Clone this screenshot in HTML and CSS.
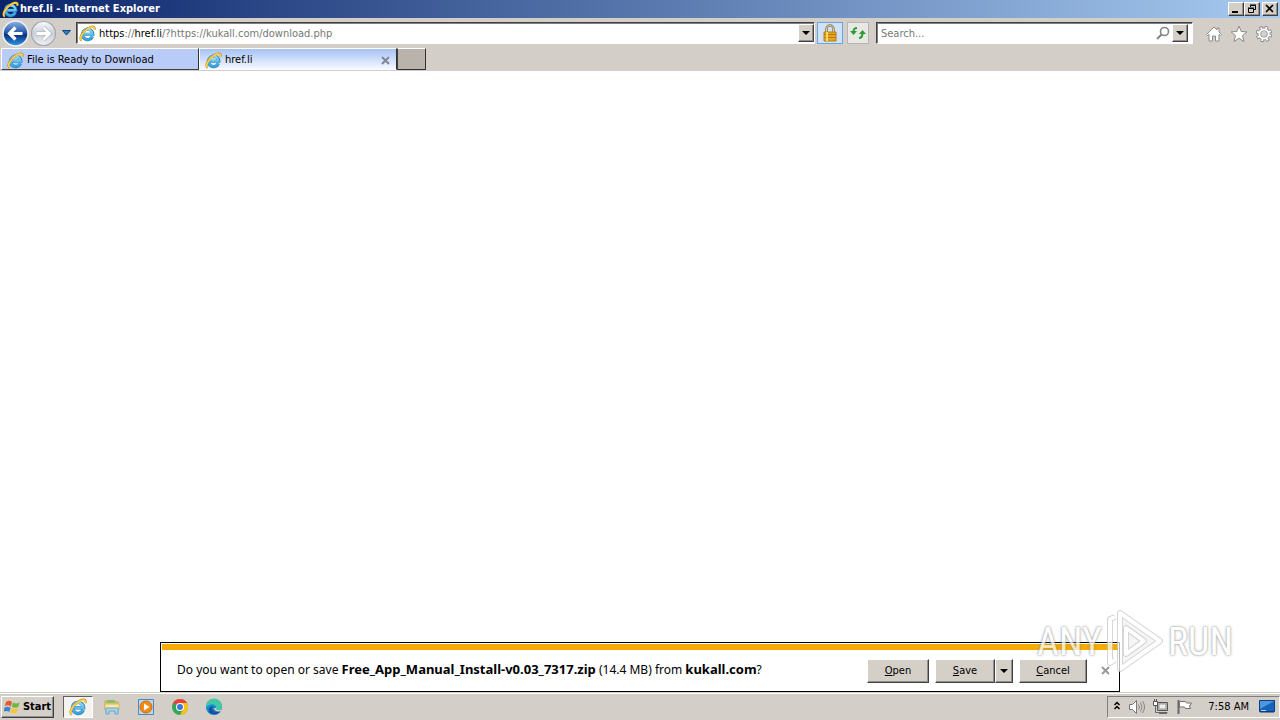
FILE: index.html
```html
<!DOCTYPE html>
<html lang="en">
<head>
<meta charset="utf-8">
<title>href.li - Internet Explorer</title>
<link rel="stylesheet" href="styles.css">
</head>
<body>
<svg class="defs" aria-hidden="true">
  <defs>
    <linearGradient id="blue" x1="0" y1="0" x2="0" y2="1"><stop offset="0" stop-color="#8bdcf8"/><stop offset="1" stop-color="#35a3e0"/></linearGradient>
    <linearGradient id="ball" x1="0" y1="0" x2="0" y2="1"><stop offset="0" stop-color="#8fb4e4"/><stop offset=".45" stop-color="#2b5cac"/><stop offset=".55" stop-color="#0b2f7c"/><stop offset="1" stop-color="#2f9bf0"/></linearGradient>
    <linearGradient id="pale" x1="0" y1="0" x2="0" y2="1"><stop offset="0" stop-color="#fafbfd"/><stop offset=".5" stop-color="#c9cfd8"/><stop offset="1" stop-color="#eef2f6"/></linearGradient>
    <symbol id="ie" viewBox="0 0 18 18">
      <path d="M14.2 12A5.500 5.500 0 1 1 14.600 9.800H5.500" fill="none" stroke="#2b7cb8" stroke-width="3.400"/>
      <path d="M14 12A5.400 5.400 0 1 1 14.400 9.800H5.500" fill="none" stroke="url(#blue)" stroke-width="2.400"/>
      <path d="M3 16.500C-.6 15 3.200 7.500 9.300 3.600 13.200 1 17.800.6 16.200 5" fill="none" stroke="#c18b12" stroke-width="2.300"/>
      <path d="M3 16.300C-.3 14.800 3.400 7.700 9.400 3.800 13 1.400 17.400 1 16 5" fill="none" stroke="#fbd550" stroke-width="1.600"/>
    </symbol>
    <symbol id="down" viewBox="0 0 8 4"><path d="M0 0h8L4 4z" fill="#000"/></symbol>
  </defs>
</svg>

<header class="titlebar">
  <svg class="ie-icon"><use href="#ie"/></svg>
  <h1 class="title">href.li - Internet Explorer</h1>
  <div class="window-buttons">
    <button class="win" aria-label="Minimize"><svg width="12" height="10"><path d="M2 8h6" stroke="#000" stroke-width="2"/></svg></button>
    <button class="win" aria-label="Restore"><svg width="12" height="10"><path d="M4.500 3V1.500h5v4H8M4 1h6M2.500 4.500h5v4h-5zM2 4h6" fill="none" stroke="#000"/></svg></button>
    <button class="win last" aria-label="Close"><svg width="12" height="10"><path d="M2 1l7 7M9 1L2 8" stroke="#000" stroke-width="1.700"/></svg></button>
  </div>
</header>

<nav class="navbar">
  <button class="plain" aria-label="Back"><svg width="27" height="27"><circle cx="13.500" cy="13.500" r="12.500" fill="url(#ball)" stroke="#eef2f8" stroke-width="1.500"/><path d="M20.500 13.500H8M13.500 7.500l-6 6 6 6" fill="none" stroke="#fff" stroke-width="3.200"/></svg></button>
  <button class="plain forward" aria-label="Forward"><svg width="27" height="27"><circle cx="13.500" cy="13.500" r="12" fill="url(#pale)" stroke="#a2a7b0" stroke-width="1.200"/><path d="M6.500 13.500H19M13.500 7.500l6 6-6 6" fill="none" stroke="#a8aeb8" stroke-width="4"/><path d="M6.500 13.500H19M13.500 7.500l6 6-6 6" fill="none" stroke="#fff" stroke-width="2.800"/></svg></button>
  <button class="plain recent" aria-label="Recent pages"><svg width="9" height="6"><path d="M.5.500h8l-4 4.500z" fill="#2385c8" stroke="#123f80"/></svg></button>
  <div class="field address">
    <svg class="ie-icon"><use href="#ie"/></svg>
    <div class="url" role="textbox" aria-label="Address" contenteditable="true" spellcheck="false"><b>https</b>://<b>href.li</b>/?https://kukall.com/download.php</div>
    <button class="drop" aria-label="Show addresses"><svg width="8" height="4"><use href="#down"/></svg></button>
  </div>
  <button class="tool lock" aria-label="Security report"><svg width="16" height="18"><path d="M4.500 9V5a3.500 3.500 0 0 1 7 0v4" fill="none" stroke="#8d7b4c" stroke-width="2.500"/><path d="M4.500 9V5a3.500 3.500 0 0 1 7 0v4" fill="none" stroke="#d9cda4"/><path d="M2 8h12v9H2z" fill="#e5a51d" stroke="#b87d12"/><path d="M2 10.500h12M2 13.500h12" stroke="#b97b10"/><path d="M5 8v9" stroke="#fbd568" stroke-width="2"/></svg></button>
  <button class="tool refresh" aria-label="Refresh"><svg width="18" height="16"><path d="M8 3C5 3 4.500 4 4.500 7M10 13c3 0 3.500-2 3.500-5" fill="none" stroke="#2f9b35" stroke-width="2"/><path d="M1 6h7L4.500 10zM10 9h7L13.500 5z" fill="#2f9b35"/></svg></button>
  <div class="field search">
    <input class="search-input" type="text" placeholder="Search..." aria-label="Search">
    <svg width="14" height="14"><circle cx="8.500" cy="5.500" r="4" fill="#fff" stroke="#858585" stroke-width="1.600"/><path d="M5.500 8.500L1 13" stroke="#858585" stroke-width="2.200"/></svg>
    <button class="drop" aria-label="Search options"><svg width="8" height="4"><use href="#down"/></svg></button>
  </div>
  <div class="commands">
    <button class="plain" aria-label="Home"><svg width="18" height="18"><path d="M1.500 9.500L9 2l3 3V3h2v4l2.500 2.500-1 1L14 9.500V16h-3.500v-5h-3v5H4V9.500l-1.500 1z" fill="#fff" stroke="#8c8c8c"/></svg></button>
    <button class="plain" aria-label="Favorites"><svg width="18" height="18"><path d="M9 1l2.200 5.500 5.800.4-4.500 3.700 1.500 5.900L9 13.300 4 16.500l1.500-5.900L1 6.900l5.800-.4z" fill="#fff" stroke="#8c8c8c"/></svg></button>
    <button class="plain" aria-label="Tools"><svg width="18" height="18"><circle cx="9" cy="9" r="6.400" fill="none" stroke="#808080" stroke-width="3.600" stroke-dasharray="2.900 2.127"/><circle cx="9" cy="9" r="4.700" fill="none" stroke="#808080" stroke-width="3.600"/><circle cx="9" cy="9" r="6.300" fill="none" stroke="#fff" stroke-width="2.200" stroke-dasharray="1.800 3.148" stroke-dashoffset="-.55"/><circle cx="9" cy="9" r="4.600" fill="none" stroke="#fff" stroke-width="2"/></svg></button>
  </div>
</nav>

<div class="tabs" role="tablist">
  <button class="tab" role="tab" aria-selected="false"><svg class="ie-icon"><use href="#ie"/></svg><span>File is Ready to Download</span></button>
  <div class="tab active">
    <button class="tab-label" role="tab" aria-selected="true"><svg class="ie-icon"><use href="#ie"/></svg><span>href.li</span></button>
    <button class="plain" aria-label="Close tab"><svg width="9" height="9"><path d="M1 1l7 7M8 1L1 8" stroke="#7e8799" stroke-width="2"/></svg></button>
  </div>
  <button class="new-tab" aria-label="New tab"></button>
</div>

<main class="page">
  <section class="notice" aria-label="Download">
    <div class="stripe"></div>
    <div class="notice-row">
      <p class="message">Do you want to open or save <b>Free_App_Manual_Install-v0.03_7317.zip</b> (14.4 MB) from <b>kukall.com</b>?</p>
      <div class="actions">
        <button class="action"><span><u>O</u>pen</span></button>
        <div class="split"><button class="action save"><span><u>S</u>ave</span></button><button class="action more" aria-label="Save options"><svg width="8" height="4"><use href="#down"/></svg></button></div>
        <button class="action cancel"><span><u>C</u>ancel</span></button>
        <button class="plain close" aria-label="Close"><svg width="9" height="9"><path d="M1 1l7 7M8 1L1 8" stroke="#9a9a9a" stroke-width="2"/></svg></button>
      </div>
    </div>
  </section>
  <div class="watermark">
    <span>ANY</span>
    <svg width="58" height="68" viewBox="0 0 58 68"><g fill="none" stroke="#c4c4c4" stroke-width="6" stroke-linejoin="round"><path d="M14 5L54 33 14 61z" fill="#f1f1f1"/><path d="M9 9L4 11v44l5-3M20 20v26l18-13z"/></g><g fill="none" stroke="#fff" stroke-width="4" stroke-linejoin="round"><path d="M14 5L54 33 14 61z"/><path d="M9 9L4 11v44l5-3M20 20v26l18-13z"/></g></svg>
    <span>RUN</span>
  </div>
</main>

<footer class="taskbar">
  <button class="start"><svg width="18" height="16"><path d="M2 3c2-2 4-1.500 6 0L6.800 7.500c-2-1.500-4-1.500-6-.3z" fill="#e8592a"/><path d="M9 3.500c2 1.200 4 1.200 6.500 0L14.200 8c-2 1-4 1-6.400-.2z" fill="#70b53c"/><path d="M.6 8.500c2-1.200 4-1 6 .3L5.300 13c-2-1.300-4-1.300-5.800-.1z" fill="#3d82d2"/><path d="M7.500 9c2 1.200 4 1.300 6.500.2l-1.300 4.300c-2 1-4 1-6.400-.3z" fill="#f7c52f"/></svg><span>Start</span></button>
  <div class="apps">
    <button class="app current" aria-label="Internet Explorer"><svg width="18" height="18"><use href="#ie"/></svg></button>
    <button class="app" aria-label="File Explorer"><svg width="18" height="18"><path d="M2 3h5l1 1h7v8H2z" fill="#e9c86a" stroke="#c5a34c"/><path d="M4 2h8v3H4z" fill="#84c26d"/><path d="M2 6h14v6H2z" fill="#fae9a5" stroke="#d7b75d"/><path d="M3 10h12v6h-3v-3H6v3H3z" fill="#a9d6ee" stroke="#65a5cc"/></svg></button>
    <button class="app" aria-label="Media Player"><svg width="18" height="18"><path d="M1.500 1.500h15v15h-15z" fill="#b9d7f1" stroke="#4f87bd"/><circle cx="9" cy="9" r="6" fill="#f08a13" stroke="#d06b08"/><path d="M7 5.500v7L12.500 9z" fill="#fff"/></svg></button>
    <button class="app" aria-label="Chrome"><svg width="18" height="18"><circle cx="9" cy="9" r="8" fill="#34a853"/><path d="M9 9L2.100 5A8 8 0 0 1 16 5H9z" fill="#ea4335"/><path d="M9 9V5h7A8 8 0 0 1 9 17l3-6z" fill="#fbc116"/><circle cx="9" cy="9" r="4" fill="#fff"/><circle cx="9" cy="9" r="3" fill="#3878e0"/></svg></button>
    <button class="app" aria-label="Edge"><svg width="18" height="18"><circle cx="9" cy="9" r="8" fill="#1683cb"/><path d="M1 9a8 8 0 0 1 16-1c.2 3-2 4-4.500 4-2 0-2-1-1.500-2 .6-3-5-5-10-1z" fill="#42c8a2"/><path d="M1 10c2-4 7-5 10-2-4-1-5 4-1 7-5-1-8-1-9-5z" fill="#1793d2"/><path d="M8 8c-2 4 1 7 7 5.500C12 18 4 17 3.500 12 4 9 6 8 8 8z" fill="#1254a0"/><path d="M11 10c0 2 2 3 6 1l-1 2c-3 1-7 0-7-3z" fill="#d4d0c8"/></svg></button>
  </div>
  <div class="tray">
    <svg width="9" height="12"><path d="M1.500 4L4 1.500 6.500 4M1.500 8L4 5.500 6.500 8" fill="none" stroke="#000" stroke-width="1.500"/></svg>
    <svg width="18" height="16"><path d="M1.500 5.500h3l4-4v13l-4-4h-3z" fill="#fff" stroke="#777"/><path d="M10.500 5.500q2 2.500 0 5M12.500 3.500q3 4.500 0 9M14.500 2q4 6 0 12" fill="none" stroke="#858585"/></svg>
    <svg width="18" height="16"><path d="M5.500 3.500h10v8h-10z" fill="#bbb" stroke="#555"/><path d="M7 5h7v5H7z" fill="#eee" stroke="#999"/><path d="M3.500 7v6.500h12M7 14.500h8" fill="none" stroke="#666"/><path d="M1.500 2.500h4v4h-4z" fill="#fff" stroke="#555"/><path d="M2.500 0v2M4.500 0v2" stroke="#555"/></svg>
    <svg width="18" height="16"><path d="M2.500 1v14" stroke="#666" stroke-width="2"/><path d="M3.500 2.500h6l1 1.500h5l-2 3 1 2.500H9.500l-1-1.500h-5z" fill="#fff" stroke="#707070"/></svg>
    <time class="clock">7:58 AM</time>
    <button class="plain" aria-label="Show desktop"><svg width="16" height="14"><path d="M.5.500h15v11H.5z" fill="#1763bb" stroke="#0d3e80"/><path d="M1 1h14L1 9z" fill="#4c98df"/><path d="M1 12.500h14" stroke="#75818f"/><path d="M2 10.500h5" stroke="#a8dcff"/></svg></button>
  </div>
</footer>
</body>
</html>
```
FILE: styles.css
```css
* { box-sizing: border-box; }
body {
  margin: 0;
  min-height: 100vh;
  display: flex;
  flex-direction: column;
  background: #fff;
  color: #000;
  font: 11px/14px Tahoma, "DejaVu Sans Condensed", "Noto Sans", sans-serif;
}
button, input { font: inherit; color: inherit; margin: 0; padding: 0; }
button { display: flex; align-items: center; justify-content: center; }
svg { display: block; flex: none; }
.defs { position: absolute; width: 0; height: 0; }
.ie-icon { width: 17px; height: 17px; }
.plain { border: 0; background: none; }

.titlebar {
  display: flex;
  align-items: center;
  height: 18px;
  padding: 0 2px;
  background: linear-gradient(90deg, #0a246a, #a6caf0);
  color: #fff;
}
.title { margin: 0; padding-left: 1px; flex: 1; font-size: 11px; line-height: 18px; font-weight: bold; }
.window-buttons { display: flex; }
.win, .drop, .action, .start {
  background: #d4d0c8;
  border: 1px solid;
  border-color: #fff #404040 #404040 #fff;
  box-shadow: inset -1px -1px #909090;
}
.win { width: 16px; height: 14px; }
.win.last { margin-left: 2px; }

.navbar {
  display: flex;
  align-items: center;
  height: 30px;
  padding-left: 2px;
  background: #d4cec8;
}
.forward { margin-left: 1px; }
.recent { width: 19px; }
.field {
  display: flex;
  align-items: center;
  height: 22px;
  background: #fff;
  border: 1px solid;
  border-color: #404040 #fff #fff #404040;
  box-shadow: inset 1px 1px #808080;
}
.address { flex: 742; padding-left: 2px; }
.url { flex: 1; padding: 2px 0 0 3px; color: #777; white-space: nowrap; outline: 0; }
.url b { font-weight: normal; color: #000; }
.drop { width: 16px; height: 18px; }
.tool { width: 22px; height: 22px; border: 1px solid #b5b5b5; background: #e8e8e5; }
.lock { width: 26px; margin: 0 4px 0 2px; border-color: #6da4e4; background: #cfe2fa; }
.search { flex: 314; margin-left: 7px; padding-right: 4px; gap: 2px; }
.search-input { flex: 1; min-width: 0; padding: 2px 0 0 4px; border: 0; background: none; outline: 0; }
.search-input::placeholder { color: #777; opacity: 1; }
.commands { display: flex; gap: 7px; padding: 2px 7px 0 12px; }

.tabs { display: flex; height: 23px; padding: 0 0 1px 1px; background: #d4cec8; }
.tab {
  display: flex;
  align-items: center;
  justify-content: flex-start;
  gap: 3px;
  width: 198px;
  padding: 2px 5px 0;
  border: 1px solid;
  border-color: #fff #303030 #404040 #fff;
  background: #b9cbf7;
}
.tab.active {
  justify-content: space-between;
  padding: 2px 6px 0 5px;
  border-bottom-color: #f7faff;
  background: linear-gradient(#a6c2f5, #f5f9ff);
}
.tab-label { gap: 3px; border: 0; background: none; }
.new-tab {
  width: 29px;
  border: 1px solid;
  border-color: #fff #303030 #303030 #404040;
  background: #b9b3ac;
}

.page { position: relative; flex: 1; display: flex; flex-direction: column; justify-content: flex-end; align-items: center; }
.notice { width: 75%; border: 1px solid #000; background: #fff; }
.stripe { height: 6px; margin: 1px 1px 0; background: #f6ab00; }
.notice-row { display: flex; align-items: center; justify-content: space-between; height: 41px; padding: 0 9px 0 16px; }
.message { margin: 0; padding-bottom: 2px; font: 12px/16px "Noto Sans", sans-serif; white-space: nowrap; }
.message b { font-size: 13px; }
.actions { display: flex; align-items: center; gap: 6px; }
.action { width: 62px; height: 24px; }
.split { display: flex; }
.save { width: 60px; }
.more { width: 18px; }
.cancel { width: 68px; }
.close { padding-left: 8px; }
.watermark {
  position: absolute;
  right: 47px;
  bottom: 16px;
  display: flex;
  align-items: center;
  gap: 4px;
  color: #fff;
  opacity: 0.7;
  font: 38px/68px "Liberation Sans Narrow", "Roboto Condensed", Roboto, sans-serif;
  text-shadow: 0 0 2px #777, 0 0 3px #999;
  pointer-events: none;
}

.taskbar {
  display: flex;
  align-items: center;
  height: 28px;
  padding: 2px 0 1px 1px;
  background: #d4cec8;
  border-top: 1px solid #d4d0c8;
  box-shadow: inset 0 1px #fff;
}
.start { gap: 1px; width: 53px; height: 22px; font-weight: bold; }
.apps { display: flex; gap: 4px; margin-left: 9px; flex: 1; }
.app { width: 30px; height: 22px; border: 1px solid transparent; background: none; }
.app.current { border-color: #606060 #fff #fff #606060; background: #f5f3f0; }
.tray {
  display: flex;
  align-items: center;
  gap: 6px;
  height: 22px;
  padding: 0 4px 0 5px;
  border: 1px solid;
  border-color: #808080 #fff #fff #808080;
}
.clock { margin: 0 4px 0 8px; }
```
